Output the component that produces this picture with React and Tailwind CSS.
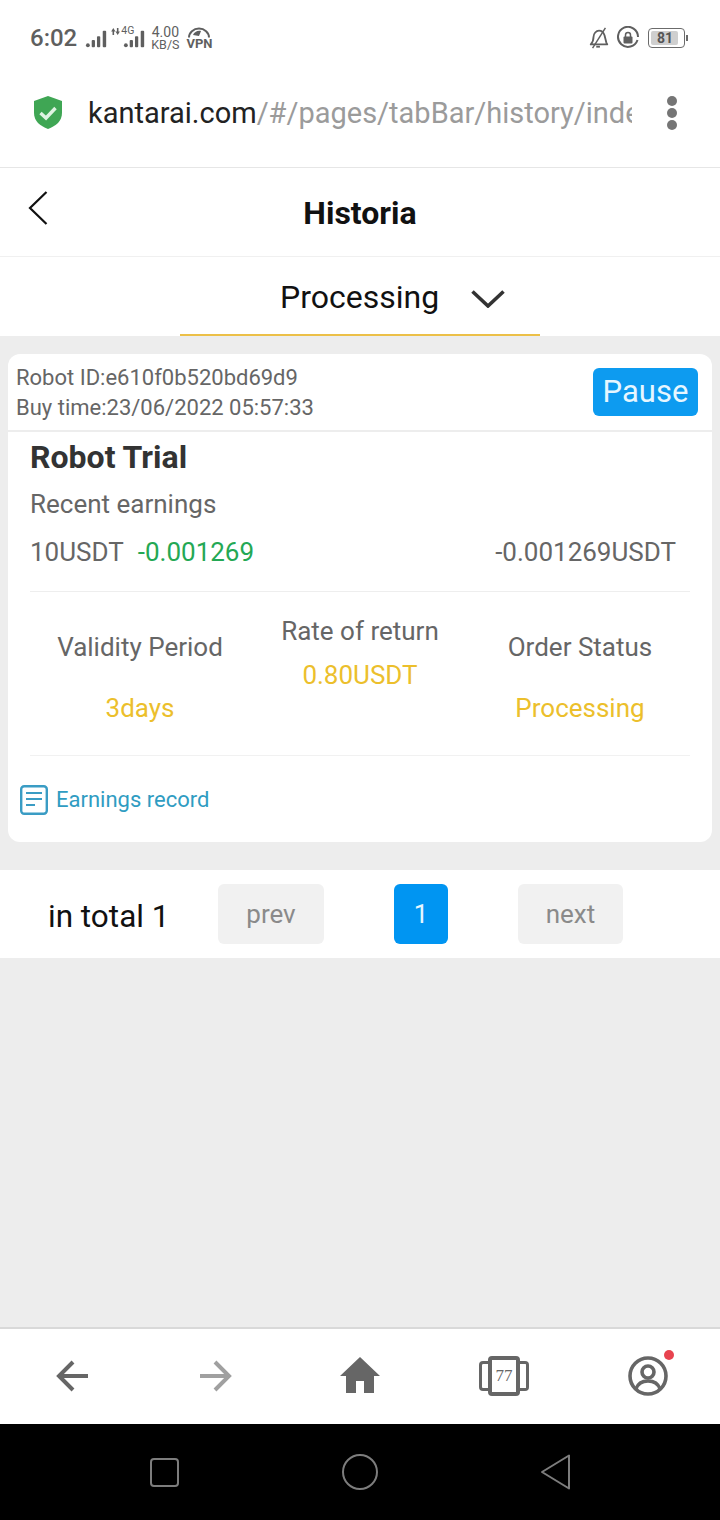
const FONT = "font-['Roboto','Liberation_Sans',sans-serif]";

function Signal({ className }) {
  return (
    <svg viewBox="0 0 24 18" className={className} fill="#5f5f5f">
      <circle cx="3" cy="15.5" r="2" />
      <rect x="7" y="10" width="3.4" height="7.5" rx="1" />
      <rect x="12.5" y="6" width="3.4" height="11.5" rx="1" />
      <rect x="18.5" y="0.5" width="3.6" height="17" rx="1" />
    </svg>
  );
}

function StatusBar() {
  return (
    <div className="h-[76px] flex items-start justify-between pl-[30px] pr-[35px] pt-[24px] text-[#5f5f5f]">
      <div className="flex items-center">
        <span className="text-[24px] leading-[28px] font-medium">6:02</span>
        <Signal className="w-[23px] h-[18px] ml-[8px] mt-[2px]" />
        <div className="relative w-[15px] h-[24px] ml-[3px]">
          <span className="absolute left-[10px] -top-[1px] text-[10.5px] leading-[12px]">4G</span>
          <svg viewBox="0 0 10 8" className="absolute left-0 top-[2px] w-[9px] h-[7px]" fill="#5f5f5f">
            <path d="M2.5 0 5 4H3.4v4H1.6V4H0zM7.5 8 5 4h1.6V0h1.8v4H10z" />
          </svg>
        </div>
        <Signal className="w-[23px] h-[18px] mt-[2px] -ml-[3px]" />
        <div className="ml-[5px] flex flex-col items-center text-[14px] leading-[13px]">
          <span>4.00</span>
          <span className="text-[12.5px] leading-[11px]">KB/S</span>
        </div>
        <div className="ml-[7px] flex flex-col items-center">
          <svg viewBox="0 0 24 11" className="w-[24px] h-[11px]" fill="none" stroke="#5f5f5f">
            <path d="M2 10.5a10 9 0 0 1 20 0" strokeWidth="2" />
            <path d="M6 8c1-3 5-5 8-4l-2 5z" fill="#5f5f5f" stroke="none" />
          </svg>
          <span className="text-[13px] leading-[12px] font-bold">VPN</span>
        </div>
      </div>
      <div className="flex items-center mt-[1px]">
        <svg viewBox="0 0 24 24" className="w-[22px] h-[26px]" fill="none" stroke="#5f5f5f" strokeWidth="2" strokeLinejoin="round">
          <path d="M3 19c2-2 3-4 3-8 0-4 3-7 6-7s5 2 6 5l2 8 1 2z" />
          <path d="M9 21.5h4" />
          <path d="M19 1 5 23" strokeWidth="1.6" />
        </svg>
        <svg viewBox="0 0 24 24" className="w-[24px] h-[24px] ml-[6px]" fill="none" stroke="#5f5f5f" strokeWidth="2">
          <path d="M21.5 14A10 10 0 1 1 22 11" />
          <rect x="7.5" y="10.5" width="9" height="7" rx="1" fill="#5f5f5f" stroke="none" />
          <path d="M9.5 11V9a2.5 2.5 0 0 1 5 0v2" strokeWidth="1.5" />
        </svg>
        <div className="ml-[8px] w-[37px] h-[20px] rounded-[4px] border border-[#6b6b6b] p-[2px] relative">
          <div className="w-[27px] h-full rounded-[2px] bg-[#cfcfcf] flex items-center justify-center">
            <span className="text-[14px] leading-none font-bold text-[#555555] ml-[1px]">81</span>
          </div>
          <div className="absolute -right-[4px] top-[6px] w-[2px] h-[6px] bg-[#6b6b6b]"></div>
        </div>
      </div>
    </div>
  );
}

function UrlBar() {
  return (
    <div className="h-[92px] flex items-start pl-[34px] border-b border-[#e6e6e6] shadow-[0_1px_2px_rgba(0,0,0,0.04)]">
      <svg viewBox="0 0 28 33" className="w-[28px] h-[33px] mt-[20px] shrink-0">
        <path d="M14 0 28 5v12c0 8-6 13-14 16C6 30 0 25 0 17V5z" fill="#3fa654" />
        <path d="M6.5 17l5.5 5 9.5-10" fill="none" stroke="#dff3e2" strokeWidth="3.4" />
      </svg>
      <div className="ml-[26px] w-[544px] mt-[18px] overflow-hidden whitespace-nowrap text-[29px] leading-[38px]">
        <span className="text-[#222222]">kantarai.com</span>
        <span className="text-[#9b9b9b]">/#/pages/tabBar/history/index</span>
      </div>
      <div className="ml-[35px] mt-[20px] flex flex-col gap-[2px]">
        <div className="w-[10px] h-[10px] rounded-full bg-[#757575]"></div>
        <div className="w-[10px] h-[10px] rounded-full bg-[#757575]"></div>
        <div className="w-[10px] h-[10px] rounded-full bg-[#757575]"></div>
      </div>
    </div>
  );
}

function Stat({ label, value, raised }) {
  return (
    <div className={`flex-1 flex flex-col items-center ${raised ? "gap-[8px] -mt-[17px]" : "gap-[25px] -mt-[1px]"}`}>
      <span className="text-[26px] leading-[36px] text-[#666666]">{label}</span>
      <span className="text-[26px] leading-[36px] text-[#ecbf2c]">{value}</span>
    </div>
  );
}

function RobotCard() {
  return (
    <div className="mx-[8px] mt-[18px] h-[488px] bg-white rounded-[12px]">
      <div className="h-[78px] flex items-center justify-between pl-[8px] pr-[14px] border-b-2 border-[#ededed]">
        <div className="text-[22px] leading-[30px] text-[#666666] mt-[2px]">
          <div>Robot ID:e610f0b520bd69d9</div>
          <div>Buy time:23/06/2022 05:57:33</div>
        </div>
        <div className="w-[105px] h-[48px] rounded-[6px] bg-[#0d9bf0] flex items-center justify-center text-[31px] text-[#e6f6ff]">
          Pause
        </div>
      </div>
      <div className="mx-[22px] h-[160px] border-b border-[#eeeeee]">
        <div className="text-[32px] leading-[50px] font-bold text-[#333333]">Robot Trial</div>
        <div className="text-[26px] leading-[44px] text-[#666666]">Recent earnings</div>
        <div className="flex items-center justify-between pr-[14px] mt-[4px] text-[26px] leading-[44px]">
          <div>
            <span className="text-[#666666]">10USDT</span>
            <span className="ml-[14px] text-[#24a854]">-0.001269</span>
          </div>
          <span className="text-[#666666]">-0.001269USDT</span>
        </div>
      </div>
      <div className="mx-[22px] h-[164px] pt-[38px] flex border-b border-[#f1f1f1]">
        <Stat label="Validity Period" value="3days" />
        <Stat label="Rate of return" value="0.80USDT" raised />
        <Stat label="Order Status" value="Processing" />
      </div>
      <div className="flex items-center pl-[12px] mt-[29px]">
        <svg viewBox="0 0 28 30" className="w-[28px] h-[30px]" fill="none" stroke="#3a9cc4" strokeWidth="2.4">
          <rect x="1.2" y="1.2" width="25.6" height="27.6" rx="3" />
          <path d="M6 8h16M6 14h16M6 20h9" strokeWidth="2" />
        </svg>
        <span className="ml-[8px] text-[22px] leading-[30px] text-[#2f9cc2]">Earnings record</span>
      </div>
    </div>
  );
}

function Pagination() {
  return (
    <div className="mt-[28px] h-[88px] bg-white flex items-start pt-[14px]">
      <span className="ml-[48px] w-[170px] mt-[15px] text-[31.5px] leading-[36px] text-[#111111]">in total 1</span>
      <div className="w-[106px] h-[60px] rounded-[6px] bg-[#f1f1f1] flex items-center justify-center text-[26px] text-[#8a8a8a]">prev</div>
      <div className="ml-[70px] w-[54px] h-[60px] rounded-[6px] bg-[#0095f2] flex items-center justify-center text-[26px] text-[#e6f6ff]">1</div>
      <div className="ml-[70px] w-[105px] h-[60px] rounded-[6px] bg-[#f1f1f1] flex items-center justify-center text-[26px] text-[#8a8a8a]">next</div>
    </div>
  );
}

function BrowserNav() {
  return (
    <div className="h-[97px] bg-white border-t-2 border-[#d9d9d9] flex items-center">
      <div className="w-[144px] flex justify-center">
        <svg viewBox="0 0 32 32" className="w-[32px] h-[32px] mb-[2px]" fill="none" stroke="#666666" strokeWidth="4">
          <path d="M32 16H3M17 2 3 16l14 14" />
        </svg>
      </div>
      <div className="w-[144px] flex justify-center">
        <svg viewBox="0 0 32 32" className="w-[32px] h-[32px] mb-[2px]" fill="none" stroke="#a0a0a0" strokeWidth="4">
          <path d="M0 16h29M15 2l14 14-14 14" />
        </svg>
      </div>
      <div className="w-[144px] flex justify-center">
        <svg viewBox="0 0 40 36" className="w-[40px] h-[36px] mb-[3px]" fill="#666666">
          <path d="M20 0 40 19h-6v17H24V24h-8v12H6V19H0z" />
        </svg>
      </div>
      <div className="w-[144px] flex justify-center">
        <div className="flex items-center mb-[2px]">
          <div className="w-[9px] h-[30px] rounded-l-[4px] border-[3.5px] border-r-0 border-[#666666]"></div>
          <div className="w-[32px] h-[40px] rounded-[4px] border-[4px] border-[#666666] flex items-center justify-center text-[17px] text-[#666666] font-['Liberation_Serif',serif]">77</div>
          <div className="w-[9px] h-[30px] rounded-r-[4px] border-[3.5px] border-l-0 border-[#666666]"></div>
        </div>
      </div>
      <div className="w-[144px] flex justify-center">
        <div className="relative w-[40px] h-[40px] mb-[2px]">
          <svg viewBox="0 0 40 40" className="w-[40px] h-[40px]" fill="none" stroke="#666666" strokeWidth="3.6">
            <circle cx="20" cy="20" r="18" />
            <circle cx="20" cy="16" r="6" />
            <path d="M8 33c2-6 7-8 12-8s10 2 12 8" />
          </svg>
          <div className="absolute -right-[6px] -top-[6px] w-[10px] h-[10px] rounded-full bg-[#e8434f]"></div>
        </div>
      </div>
    </div>
  );
}

function SystemNav() {
  return (
    <div className="h-[96px] bg-black flex items-center">
      <div className="w-[328px] flex justify-center">
        <div className="w-[29px] h-[29px] rounded-[4px] border-2 border-[#7d7d7d]"></div>
      </div>
      <div className="w-[64px] flex justify-center">
        <div className="w-[36px] h-[36px] rounded-full border-2 border-[#7d7d7d]"></div>
      </div>
      <div className="w-[328px] flex justify-center">
        <svg viewBox="0 0 32 36" className="w-[32px] h-[36px]" fill="none" stroke="#7d7d7d" strokeWidth="2" strokeLinejoin="round">
          <path d="M2 18 29 1.5v33z" />
        </svg>
      </div>
    </div>
  );
}

export default function App() {
  return (
    <div className={`w-[720px] h-[1520px] flex flex-col bg-[#ededed] overflow-hidden ${FONT}`}>
      <div className="bg-white">
        <StatusBar />
        <UrlBar />
      </div>
      <div className="h-[89px] bg-white flex items-center relative border-b border-[#f0f0f0]">
        <svg viewBox="0 0 20 34" className="absolute left-[28px] top-[23px] w-[20px] h-[34px]" fill="none" stroke="#111111" strokeWidth="2.2">
          <path d="M18.5 1 2 17l16.5 16" />
        </svg>
        <div className="w-full text-center text-[32px] font-bold text-[#111111] mt-[1px]">Historia</div>
      </div>
      <div className="h-[79px] bg-white flex justify-center">
        <div className="w-[360px] h-full border-b-2 border-[#ecc048] flex items-center pl-[100px]">
          <span className="text-[32px] text-[#111111] mt-[2px]">Processing</span>
          <svg viewBox="0 0 34 18" className="ml-[32px] mt-[6px] w-[34px] h-[18px]" fill="none" stroke="#333333" strokeWidth="3.6">
            <path d="M1.5 1.5 17 16 32.5 1.5" />
          </svg>
        </div>
      </div>
      <RobotCard />
      <Pagination />
      <div className="flex-1"></div>
      <BrowserNav />
      <SystemNav />
    </div>
  );
}
